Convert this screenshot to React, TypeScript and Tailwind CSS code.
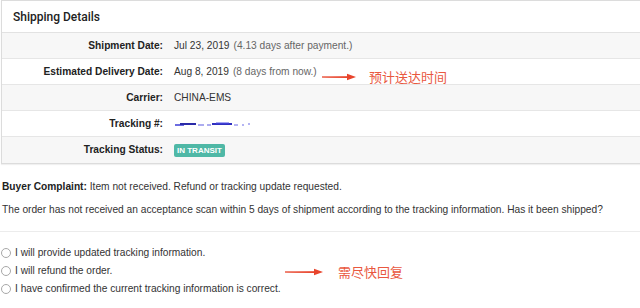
import React from "react";

const rows: { label: string; value: React.ReactNode; gray: boolean }[] = [
  {
    label: "Shipment Date:",
    value: (
      <>
        Jul 23, 2019 <span className="ml-1 text-[#666]">(4.13 days after payment.)</span>
      </>
    ),
    gray: true,
  },
  {
    label: "Estimated Delivery Date:",
    value: (
      <>
        Aug 8, 2019 <span className="ml-1 text-[#666]">(8 days from now.)</span>
      </>
    ),
    gray: false,
  },
  { label: "Carrier:", value: "CHINA-EMS", gray: true },
  {
    label: "Tracking #:",
    value: (
      <svg width="80" height="6" viewBox="0 0 80 6" className="block">
        <path d="M1 4 H10" stroke="#3b3bd6" strokeWidth="1.5" />
        <path d="M6 3 H22" stroke="#2a2aa8" strokeWidth="2" />
        <path d="M24 4 H30 M33 4 H37" stroke="#5a5ae0" strokeWidth="1.2" />
        <path d="M38 3 H58" stroke="#3030c0" strokeWidth="2" />
        <path d="M42 2 H55" stroke="#5050e8" strokeWidth="1" />
        <path d="M60 4 H64 M68 4 H70 M74 3 H76" stroke="#6a6ae8" strokeWidth="1.2" />
      </svg>
    ),
    gray: false,
  },
  {
    label: "Tracking Status:",
    value: (
      <span className="inline-block rounded-[2px] bg-[#4fb8a6] px-[3px] text-[8px] font-bold leading-[13px] text-white">
        IN TRANSIT
      </span>
    ),
    gray: true,
  },
];

function Arrow({ width }: { width: number }) {
  return (
    <svg width={width} height="8" viewBox={`0 0 ${width} 8`}>
      <path d={`M0 4.2 L${width - 8} 3.6 L${width - 8} 5 Z`} fill="#e8442c" />
      <path d={`M0 4 L${width - 8} 4`} stroke="#e8442c" strokeWidth="1.3" />
      <path d={`M${width - 9} 0.8 L${width} 4 L${width - 9} 7.2 Z`} fill="#e8442c" />
    </svg>
  );
}

export default function App() {
  return (
    <div
      className="relative h-[308px] w-[640px] overflow-hidden bg-white text-[10.2px] text-[#333]"
      style={{ fontFamily: '"Liberation Sans", Arial, sans-serif' }}
    >
      <div className="ml-px w-[680px] border border-[#dcdcdc] shadow-[0_1px_1px_rgba(0,0,0,0.06)]">
        <div
          className="flex h-[32px] items-center border-b border-[#e2e2e2] pl-[11px] text-[12px] font-medium text-[#222]"
          style={{ fontFamily: 'Roboto, "Liberation Sans", sans-serif' }}
        >
          Shipping Details
        </div>
        {rows.map((r, i) => (
          <div
            key={r.label}
            className={`flex h-[26px] items-center ${i < rows.length - 1 ? "border-b border-[#e6e6e6]" : ""} ${
              r.gray ? "bg-[#f7f7f7]" : "bg-white"
            }`}
          >
            <div className="w-[161px] text-right font-bold text-[#222]">{r.label}</div>
            <div className="ml-[11px] flex items-center">{r.value}</div>
          </div>
        ))}
      </div>

      <p className="mt-[16px] pl-[2px] leading-[14px]">
        <span className="font-bold text-[#222]">Buyer Complaint:</span> Item not received. Refund or tracking update
        requested.
      </p>
      <p className="mt-[9px] whitespace-nowrap pl-[2px] leading-[14px]">
        The order has not received an acceptance scan within 5 days of shipment according to the tracking
        information. Has it been shipped?
      </p>
      <div className="mt-[14px] border-t border-[#ececec]" />

      <div className="mt-[14px] flex flex-col gap-[4px]">
        {[
          "I will provide updated tracking information.",
          "I will refund the order.",
          "I have confirmed the current tracking information is correct.",
        ].map((t) => (
          <label key={t} className="flex h-[14px] items-center">
            <span className="ml-[1px] inline-block h-[10px] w-[10px] rounded-full border border-[#a8a8a8] bg-white" />
            <span className="ml-[4px] leading-[14px]">{t}</span>
          </label>
        ))}
      </div>

      <div className="absolute left-[322px] top-[69px] flex items-center">
        <Arrow width={34} />
        <span
          className="ml-[13px] text-[13px] leading-[16px] text-[#e9583f]"
          style={{ fontFamily: '"Noto Sans CJK SC", sans-serif' }}
        >
          预计送达时间
        </span>
      </div>
      <div className="absolute left-[285px] top-[264px] flex items-center">
        <Arrow width={38} />
        <span
          className="ml-[15px] text-[13px] leading-[16px] text-[#e9583f]"
          style={{ fontFamily: '"Noto Sans CJK SC", sans-serif' }}
        >
          需尽快回复
        </span>
      </div>
    </div>
  );
}
